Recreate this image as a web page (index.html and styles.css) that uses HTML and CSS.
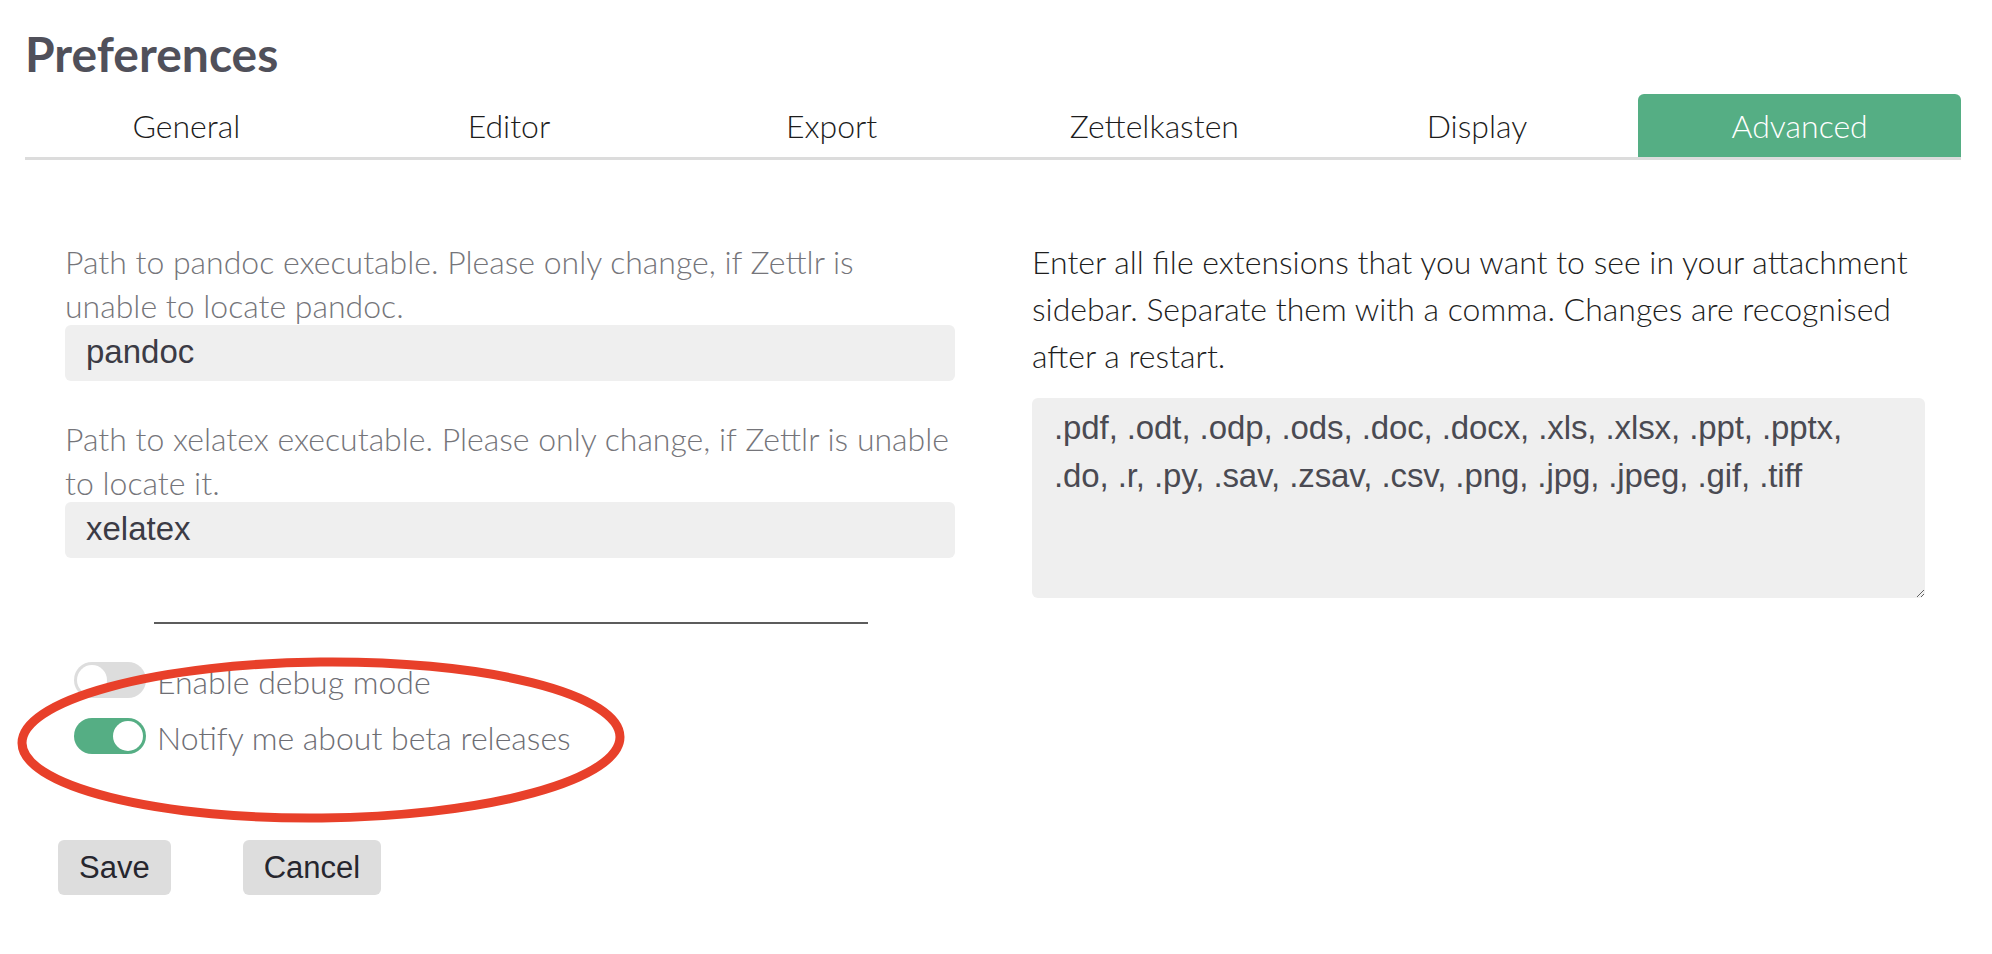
FILE: index.html
```html
<!DOCTYPE html>
<html lang="en">
<head>
<meta charset="utf-8">
<title>Preferences</title>
<link rel="stylesheet" href="styles.css">
</head>
<body>
<div class="page">
  <h1 class="title">Preferences</h1>
  <nav class="tabs">
    <div class="tab">General</div>
    <div class="tab">Editor</div>
    <div class="tab">Export</div>
    <div class="tab">Zettelkasten</div>
    <div class="tab">Display</div>
    <div class="tab tab-active">Advanced</div>
  </nav>
  <div class="columns">
    <div class="col col-left">
      <label class="field-label">Path to pandoc executable. Please only change, if Zettlr is<br>unable to locate pandoc.</label>
      <input class="field-input" type="text" value="pandoc">
      <label class="field-label field-label-second">Path to xelatex executable. Please only change, if Zettlr is unable to locate it.</label>
      <input class="field-input" type="text" value="xelatex">
      <hr class="divider">
      <div class="toggles">
        <div class="toggle-row">
          <span class="switch"><span class="knob"></span></span>
          <span class="toggle-label">Enable debug mode</span>
        </div>
        <div class="toggle-row">
          <span class="switch switch-on"><span class="knob"></span></span>
          <span class="toggle-label">Notify me about beta releases</span>
        </div>
      </div>
    </div>
    <div class="col col-right">
      <p class="ext-label">Enter all file extensions that you want to see in your attachment sidebar. Separate them with a comma. Changes are recognised after a restart.</p>
      <textarea class="ext-area">.pdf, .odt, .odp, .ods, .doc, .docx, .xls, .xlsx, .ppt, .pptx, .do, .r, .py, .sav, .zsav, .csv, .png, .jpg, .jpeg, .gif, .tiff</textarea>
    </div>
  </div>
  <div class="actions">
    <button class="btn" type="button">Save</button>
    <button class="btn" type="button">Cancel</button>
  </div>
  <svg class="annotation" width="640" height="180" viewBox="0 0 640 180" aria-hidden="true">
    <ellipse cx="320" cy="90" rx="299" ry="78" fill="none" stroke="#e8402a" stroke-width="9" transform="rotate(-0.6 320 90)"/>
  </svg>
</div>
</body>
</html>
```

FILE: styles.css
```css
* { box-sizing: border-box; }

html, body {
  margin: 0;
  padding: 0;
  background: #ffffff;
}

body {
  font-family: Lato, "Noto Sans", sans-serif;
  width: 1992px;
  height: 954px;
  overflow: hidden;
}

.page {
  position: relative;
  padding: 26px 31px 0 25px;
}

.title {
  margin: 0;
  font-family: Lato, sans-serif;
  font-weight: 700;
  font-size: 48px;
  line-height: 56px;
  color: #50505a;
}

.tabs {
  margin-top: 12px;
  display: grid;
  grid-template-columns: repeat(6, 1fr);
  border-bottom: 3px solid #dcdcdc;
}

.tab {
  height: 63px;
  line-height: 63px;
  text-align: center;
  font-family: Lato, sans-serif;
  font-weight: 300;
  font-size: 32px;
  color: #1c1c1c;
}

.tab-active {
  background: #55ae84;
  color: #ffffff;
  border-radius: 6px 6px 0 0;
}

.columns {
  display: grid;
  grid-template-columns: 1fr 1fr;
  padding-top: 80px;
}

.col-left { padding: 0 36px 0 40px; }
.col-right { padding: 0 36px 0 39px; }

.field-label {
  display: block;
  margin-right: -2px;
  font-family: Lato, sans-serif;
  font-weight: 300;
  font-size: 32px;
  line-height: 44px;
  color: #75757a;
}

.field-label-second { margin-top: 36px; }

.field-input {
  display: block;
  width: calc(100% - 2px);
  height: 56px;
  margin-top: -3px;
  padding: 0 21px 3px;
  border: none;
  border-radius: 6px;
  background: #efefef;
  font-family: "Liberation Sans", Arial, sans-serif;
  font-size: 33px;
  color: #3b3b45;
  outline: none;
}

.divider {
  width: 80%;
  height: 2px;
  margin: 64px auto 0;
  border: none;
  background: #5c5c5c;
}

.toggles {
  margin-top: 38px;
  margin-left: 9px;
  display: flex;
  flex-direction: column;
  gap: 20px;
}

.toggle-row {
  display: flex;
  align-items: center;
  gap: 11px;
  height: 36px;
}

.switch {
  position: relative;
  display: inline-block;
  flex: none;
  width: 72px;
  height: 36px;
  border-radius: 18px;
  background: #dddddd;
}

.knob {
  position: absolute;
  top: 3px;
  left: 3px;
  width: 30px;
  height: 30px;
  border-radius: 50%;
  background: #ffffff;
}

.switch-on { background: #55ae84; }
.switch-on .knob { left: 39px; }

.toggle-label {
  font-family: Lato, sans-serif;
  font-weight: 300;
  font-size: 32px;
  line-height: 36px;
  color: #6e6e74;
  padding-top: 4px;
}

.ext-label {
  margin: -2px 0 0;
  font-family: Lato, sans-serif;
  font-weight: 300;
  font-size: 32px;
  line-height: 47px;
  color: #1e1e1e;
}

.ext-area {
  display: block;
  width: 100%;
  height: 200px;
  margin-top: 19px;
  padding: 6px 22px;
  border: none;
  border-radius: 6px;
  background: #efefef;
  font-family: "Liberation Sans", Arial, sans-serif;
  font-size: 33px;
  letter-spacing: -0.1px;
  line-height: 48px;
  color: #4a4a52;
  resize: vertical;
  outline: none;
}

.actions {
  display: flex;
  gap: 72px;
  margin-top: 86px;
  padding-left: 33px;
}

.btn {
  height: 55px;
  padding: 0 21px;
  border: none;
  border-radius: 6px;
  background: #dddddd;
  font-family: "Liberation Sans", Arial, sans-serif;
  font-size: 31px;
  color: #26262e;
}

.annotation {
  position: absolute;
  left: 1px;
  top: 650px;
  pointer-events: none;
}
```
